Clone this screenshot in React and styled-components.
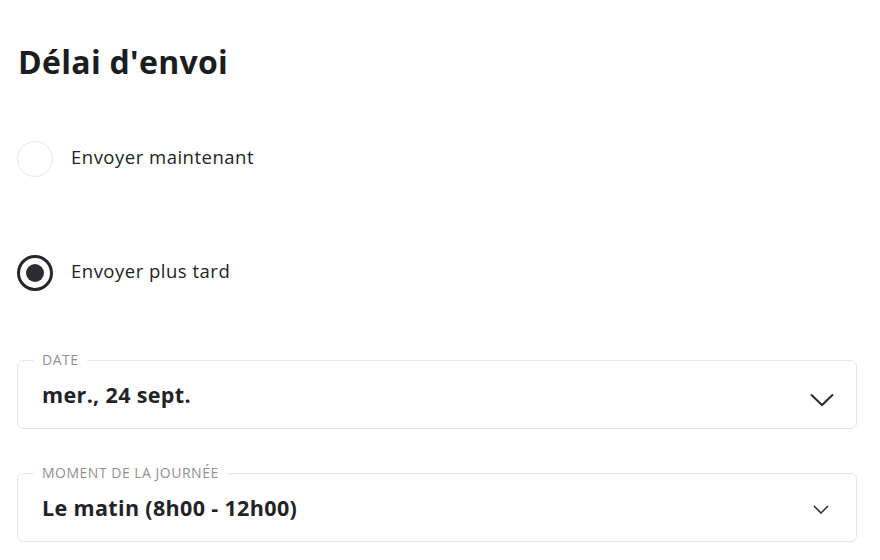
import React, { useState } from "react";
import styled, { createGlobalStyle } from "styled-components";

const GlobalStyle = createGlobalStyle`
  html, body {
    margin: 0;
    padding: 0;
    background: #ffffff;
  }
  body {
    font-family: "Open Sans", "Noto Sans", sans-serif;
    color: #222326;
  }
`;

const Page = styled.div`
  width: 880px;
  height: 560px;
  box-sizing: border-box;
  padding: 40px 23px 0 17px;
  overflow: hidden;
`;

const Title = styled.h1`
  margin: 0 0 0 1px;
  font-size: 32px;
  font-weight: 700;
  line-height: 44px;
  letter-spacing: 0.3px;
  color: #1c1d20;
`;

const Options = styled.div`
  display: flex;
  flex-direction: column;
  gap: 78px;
  margin-top: 57px;
`;

const Option = styled.label`
  display: flex;
  align-items: center;
  gap: 18px;
  cursor: pointer;
`;

const RadioCircle = styled.span`
  width: 36px;
  height: 36px;
  box-sizing: border-box;
  border-radius: 50%;
  border: ${(p) => (p.$checked ? "3px solid #26272b" : "1px solid #e6e6e6")};
  display: flex;
  align-items: center;
  justify-content: center;

  &::after {
    content: "";
    display: ${(p) => (p.$checked ? "block" : "none")};
    width: 18px;
    height: 18px;
    border-radius: 50%;
    background: #2b2c31;
  }
`;

const OptionText = styled.span`
  font-size: 18.5px;
  letter-spacing: 0.5px;
  color: #222326;
  margin-top: -5px;
`;

const Fields = styled.div`
  display: flex;
  flex-direction: column;
  gap: 37px;
  margin-top: 62px;
`;

const Field = styled.fieldset`
  margin: 0;
  padding: 0 22px 0 24px;
  border: 1px solid #e6e6e6;
  border-radius: 6px;
  cursor: pointer;
`;

const Legend = styled.legend`
  padding: 0 8px;
  margin-left: -8px;
  font-size: 14px;
  line-height: 14px;
  letter-spacing: 0.5px;
  color: #8f9095;
  text-transform: uppercase;
`;

const Row = styled.div`
  height: 61px;
  display: flex;
  align-items: center;
  justify-content: space-between;
`;

const Value = styled.span`
  font-size: 21.5px;
  font-weight: 700;
  letter-spacing: 0.35px;
  color: #222326;
  margin-top: -6px;
`;

const Chevron = ({ size }) =>
  size === "large" ? (
    <svg width="24" height="14" viewBox="0 0 24 14" fill="none">
      <path d="M1 1.5 L12 12 L23 1.5" stroke="#2a2b2f" strokeWidth="2" />
    </svg>
  ) : (
    <svg width="16" height="9" viewBox="0 0 16 9" fill="none">
      <path d="M1 1 L8 8 L15 1" stroke="#2a2b2f" strokeWidth="1.5" />
    </svg>
  );

const ChevronBox = styled.span`
  display: flex;
  margin-top: ${(p) => p.$offset}px;
  margin-right: ${(p) => p.$right || 0}px;
`;

export default function App() {
  const [mode, setMode] = useState("later");

  return (
    <Page>
      <GlobalStyle />
      <Title>Délai d'envoi</Title>
      <Options>
        <Option onClick={() => setMode("now")}>
          <RadioCircle $checked={mode === "now"} />
          <OptionText>Envoyer maintenant</OptionText>
        </Option>
        <Option onClick={() => setMode("later")}>
          <RadioCircle $checked={mode === "later"} />
          <OptionText>Envoyer plus tard</OptionText>
        </Option>
      </Options>
      <Fields>
        <Field>
          <Legend>Date</Legend>
          <Row>
            <Value>mer., 24 sept.</Value>
            <ChevronBox $offset={4}>
              <Chevron size="large" />
            </ChevronBox>
          </Row>
        </Field>
        <Field>
          <Legend>Moment de la journée</Legend>
          <Row>
            <Value>Le matin (8h00 - 12h00)</Value>
            <ChevronBox $offset={-2} $right={5}>
              <Chevron size="small" />
            </ChevronBox>
          </Row>
        </Field>
      </Fields>
    </Page>
  );
}
